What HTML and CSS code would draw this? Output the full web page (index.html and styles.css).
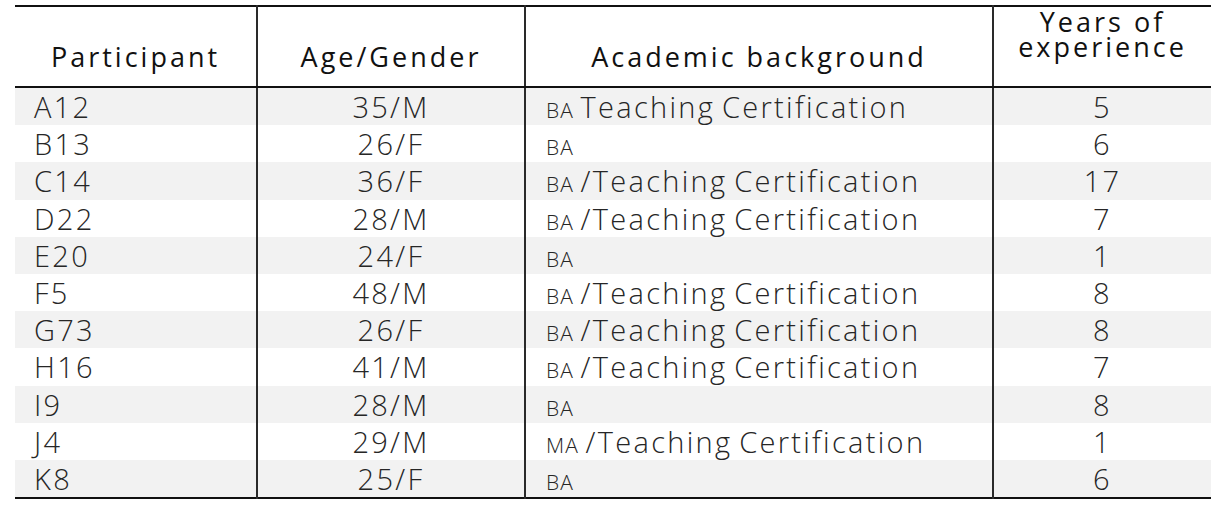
FILE: index.html
```html
<!DOCTYPE html>
<html>
<head>
<meta charset="utf-8">
<link rel="stylesheet" href="styles.css">
</head>
<body>
<table class="data">
  <colgroup>
    <col class="c1"><col class="c2"><col class="c3"><col class="c4">
  </colgroup>
  <thead>
    <tr>
      <th>Participant</th>
      <th>Age/Gender</th>
      <th>Academic background</th>
      <th class="two"><span class="ln">Years of</span><span class="ln">experience</span></th>
    </tr>
  </thead>
  <tbody>
    <tr><td class="id">A12</td><td class="ctr">35/M</td><td class="bg"><span class="deg">BA</span> Teaching Certification</td><td class="ctr">5</td></tr>
    <tr><td class="id">B13</td><td class="ctr">26/F</td><td class="bg"><span class="deg">BA</span></td><td class="ctr">6</td></tr>
    <tr><td class="id">C14</td><td class="ctr">36/F</td><td class="bg"><span class="deg">BA</span> /Teaching Certification</td><td class="ctr">17</td></tr>
    <tr><td class="id">D22</td><td class="ctr">28/M</td><td class="bg"><span class="deg">BA</span> /Teaching Certification</td><td class="ctr">7</td></tr>
    <tr><td class="id">E20</td><td class="ctr">24/F</td><td class="bg"><span class="deg">BA</span></td><td class="ctr">1</td></tr>
    <tr><td class="id">F5</td><td class="ctr">48/M</td><td class="bg"><span class="deg">BA</span> /Teaching Certification</td><td class="ctr">8</td></tr>
    <tr><td class="id">G73</td><td class="ctr">26/F</td><td class="bg"><span class="deg">BA</span> /Teaching Certification</td><td class="ctr">8</td></tr>
    <tr><td class="id">H16</td><td class="ctr">41/M</td><td class="bg"><span class="deg">BA</span> /Teaching Certification</td><td class="ctr">7</td></tr>
    <tr><td class="id">I9</td><td class="ctr">28/M</td><td class="bg"><span class="deg">BA</span></td><td class="ctr">8</td></tr>
    <tr><td class="id">J4</td><td class="ctr">29/M</td><td class="bg"><span class="deg">MA</span> /Teaching Certification</td><td class="ctr">1</td></tr>
    <tr><td class="id">K8</td><td class="ctr">25/F</td><td class="bg"><span class="deg">BA</span></td><td class="ctr">6</td></tr>
  </tbody>
</table>
</body>
</html>
```
FILE: styles.css
```css
html, body {
  margin: 0;
  padding: 0;
  background: #ffffff;
}
body {
  padding: 5px 0 0 15px;
  font-family: "Open Sans", "Noto Sans", sans-serif;
  color: #262626;
}
.data {
  border-collapse: collapse;
  width: 1196px;
  table-layout: fixed;
  border-top: 2px solid #111111;
  border-bottom: 2px solid #111111;
}
.c1 { width: 242px; }
.c2 { width: 268px; }
.c3 { width: 468px; }
.c4 { width: 218px; }
.data th {
  height: 81px;
  box-sizing: border-box;
  padding: 37px 0 0 0;
  font-weight: 400;
  font-size: 27px;
  line-height: 25px;
  letter-spacing: 3px;
  color: #111111;
  text-align: center;
  vertical-align: top;
  border-bottom: 2px solid #111111;
}
.data th.two {
  padding-top: 2px;
}
.ln {
  display: block;
  line-height: 25px;
}
.data th + th,
.data td + td {
  border-left: 2px solid #2a2a2a;
}
.data td {
  height: 37.2px;
  padding: 0;
  font-size: 29px;
  font-weight: 300;
  line-height: 37.2px;
  letter-spacing: 2.3px;
  vertical-align: middle;
  white-space: nowrap;
}
.data tbody tr:nth-child(odd) td {
  background: #f2f2f2;
}
.data td.id {
  padding-left: 19px;
  text-align: left;
}
.data td.ctr {
  text-align: center;
}
.data td.bg {
  padding-left: 20px;
  text-align: left;
  word-spacing: -3px;
}
.deg {
  font-size: 21px;
  line-height: 0;
  letter-spacing: 1px;
  word-spacing: 0;
}
```
